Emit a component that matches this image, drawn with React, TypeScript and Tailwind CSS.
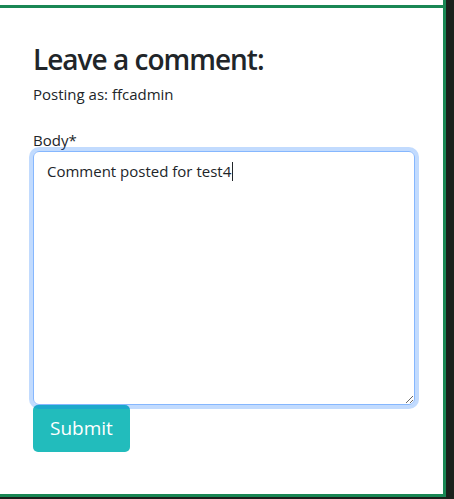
import React, { useEffect, useRef } from 'react';

const font = { fontFamily: '"Open Sans", "Noto Sans", sans-serif' };

const CommentForm: React.FC = () => {
  const ref = useRef<HTMLTextAreaElement>(null);

  useEffect(() => {
    const el = ref.current;
    if (!el) return;
    el.focus();
    el.setSelectionRange(el.value.length, el.value.length);
  }, []);

  return (
    <div className="pl-[33px] pr-[27px] pt-[35px]">
      <h3 className="text-[28px] leading-[1.2] font-semibold text-[#212529] mb-[6px] tracking-[-1px]">
        Leave a comment:
      </h3>
      <p className="text-[15px] text-[#212529] mb-[26px]">Posting as: ffcadmin</p>
      <label className="block text-[15px] text-[#212529] leading-[1.2] mb-[2px]">Body*</label>
      <div className="relative w-[382px]">
        <textarea
          ref={ref}
          defaultValue="Comment posted for test4"
          className="block w-[382px] h-[254px] rounded-[6px] border border-[#86b7fe] px-[13px] py-[8px] text-[15px] text-[#212529] outline-none shadow-[0_0_0_4px_rgba(13,110,253,0.25)] resize-y caret-transparent"
          style={font}
        />
        {/* caret drawn over the field so it shows in a still picture */}
        <div className="absolute left-[199px] top-[11px] w-px h-[19px] bg-[#212529] pointer-events-none" />
      </div>
      <button
        className="mt-0 h-[47px] px-[17px] rounded-[5px] bg-[#22bcbc] text-white text-[19px]"
        style={font}
      >
        Submit
      </button>
    </div>
  );
};

export default function App() {
  return (
    <div className="w-[454px] h-[499px] bg-[#1b211c] overflow-hidden" style={font}>
      <div className="w-[446px] h-[497px] bg-white border-r-[3px] border-b-[3px] border-[#198754] pt-[5px]">
        <div className="h-[3px] bg-[#198754]" />
        <CommentForm />
      </div>
    </div>
  );
}
